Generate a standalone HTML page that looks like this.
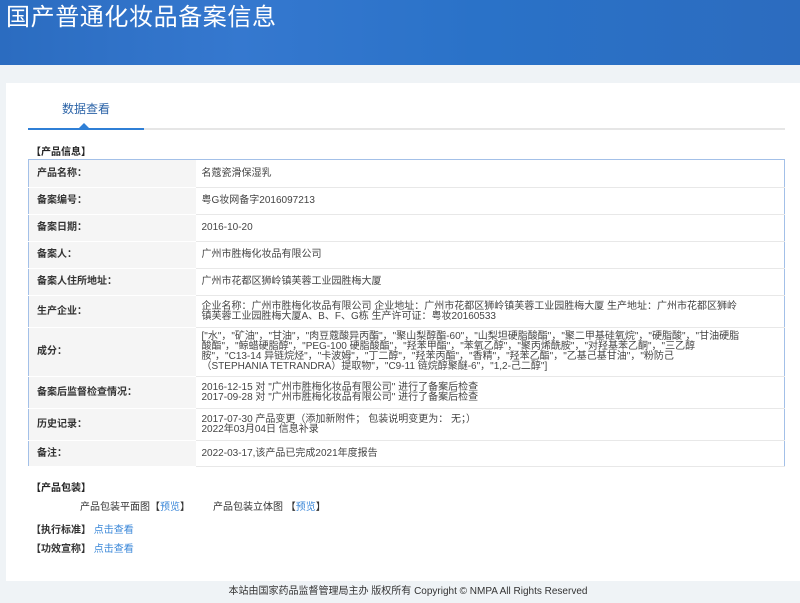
<!DOCTYPE html>
<html><head><meta charset="utf-8"><style>
*{margin:0;padding:0;box-sizing:border-box}
body{width:800px;height:603px;overflow:hidden;background:#eff3f6;font-family:"Liberation Sans","Noto Sans CJK SC",sans-serif;font-size:10px;color:#333;position:relative}
.hdr{position:absolute;left:0;top:0;width:800px;height:65px;background:linear-gradient(90deg,#2b6cc0 0%,#3578cf 30%,#2a72c8 60%,#2c6cbf 100%)}
.hdr h1{position:absolute;left:6px;top:0px;font-size:24px;line-height:30px;font-weight:normal;color:#fff;letter-spacing:0.6px;font-family:"Noto Sans CJK SC",sans-serif}
.panel{position:absolute;left:6px;top:83px;width:794px;height:498px;background:#fff}
.tab{position:absolute;left:28px;top:101px;width:116px;text-align:center;font-size:12px;line-height:16px;color:#2b63a7}
.tabline{position:absolute;left:28px;top:128px;width:757px;height:2px;background:#e6e6e6}
.tabact{position:absolute;left:28px;top:128px;width:116px;height:2px;background:#2f7fd6}
.tri{position:absolute;left:79px;top:123px;border-left:5px solid transparent;border-right:5px solid transparent;border-bottom:5px solid #2f7fd6}
.sec{position:absolute;font-weight:bold;font-size:10px;line-height:12px;color:#222}
table{position:absolute;left:28px;top:159px;width:757px;border-collapse:collapse;border:1px solid #a3c0e8}
td{border-bottom:1px solid #e8e8e8;vertical-align:middle;line-height:10px;font-size:10px}
td.l{width:167px;background:#f5f5f5;font-weight:bold;padding-left:8px;color:#333;border-bottom:1px solid #fff}
td.v{padding:0 44px 0 6px;color:#444;font-size:10px}
a{color:#3a87d8;text-decoration:none}
.foot{position:absolute;left:0;top:581px;width:800px;height:22px;text-align:center;line-height:22px;font-size:10px;color:#333;padding-left:16px}
</style></head><body>
<div class="hdr"><h1>国产普通化妆品备案信息</h1></div>
<div class="panel"></div>
<div class="tab">数据查看</div>
<div class="tabline"></div><div class="tabact"></div><div class="tri"></div>
<div class="sec" style="left:31px;top:147px">【产品信息】</div>
<table>
<tr style="height:28px"><td class="l">产品名称：</td><td class="v">名蔻瓷滑保湿乳</td></tr>
<tr style="height:27px"><td class="l">备案编号：</td><td class="v">粤G妆网备字2016097213</td></tr>
<tr style="height:27px"><td class="l">备案日期：</td><td class="v">2016-10-20</td></tr>
<tr style="height:27px"><td class="l">备案人：</td><td class="v">广州市胜梅化妆品有限公司</td></tr>
<tr style="height:27px"><td class="l">备案人住所地址：</td><td class="v">广州市花都区狮岭镇芙蓉工业园胜梅大厦</td></tr>
<tr style="height:32px"><td class="l">生产企业：</td><td class="v">企业名称：广州市胜梅化妆品有限公司 企业地址：广州市花都区狮岭镇芙蓉工业园胜梅大厦 生产地址：广州市花都区狮岭镇芙蓉工业园胜梅大厦A、B、F、G栋 生产许可证：粤妆20160533</td></tr>
<tr style="height:49px"><td class="l">成分：</td><td class="v">["水"，"矿油"，"甘油"，"肉豆蔻酸异丙酯"，"聚山梨醇酯-60"，"山梨坦硬脂酸酯"，"聚二甲基硅氧烷"，"硬脂酸"，"甘油硬脂酸酯"，"鲸蜡硬脂醇"，"PEG-100 硬脂酸酯"，"羟苯甲酯"，"苯氧乙醇"，"聚丙烯酰胺"，"对羟基苯乙酮"，"三乙醇胺"，"C13-14 异链烷烃"，"卡波姆"，"丁二醇"，"羟苯丙酯"，"香精"，"羟苯乙酯"，"乙基己基甘油"，"粉防己（STEPHANIA TETRANDRA）提取物"，"C9-11 链烷醇聚醚-6"，"1,2-己二醇"]</td></tr>
<tr style="height:32px"><td class="l">备案后监督检查情况：</td><td class="v">2016-12-15 对 "广州市胜梅化妆品有限公司" 进行了备案后检查<br>2017-09-28 对 "广州市胜梅化妆品有限公司" 进行了备案后检查</td></tr>
<tr style="height:32px"><td class="l">历史记录：</td><td class="v">2017-07-30 产品变更（添加新附件； 包装说明变更为： 无；）<br>2022年03月04日 信息补录</td></tr>
<tr style="height:26px"><td class="l">备注：</td><td class="v">2022-03-17,该产品已完成2021年度报告</td></tr>
</table>
<div class="sec" style="left:31px;top:483px">【产品包装】</div>
<div style="position:absolute;left:80px;top:502px;line-height:12px">产品包装平面图【<a>预览</a>】</div>
<div style="position:absolute;left:213px;top:502px;line-height:12px">产品包装立体图 【<a>预览</a>】</div>
<div style="position:absolute;left:31px;top:525px;line-height:12px"><b>【执行标准】</b> <a>点击查看</a></div>
<div style="position:absolute;left:31px;top:544px;line-height:12px"><b>【功效宣称】</b> <a>点击查看</a></div>
<div class="foot">本站由国家药品监督管理局主办 版权所有 Copyright © NMPA All Rights Reserved</div>
</body></html>
